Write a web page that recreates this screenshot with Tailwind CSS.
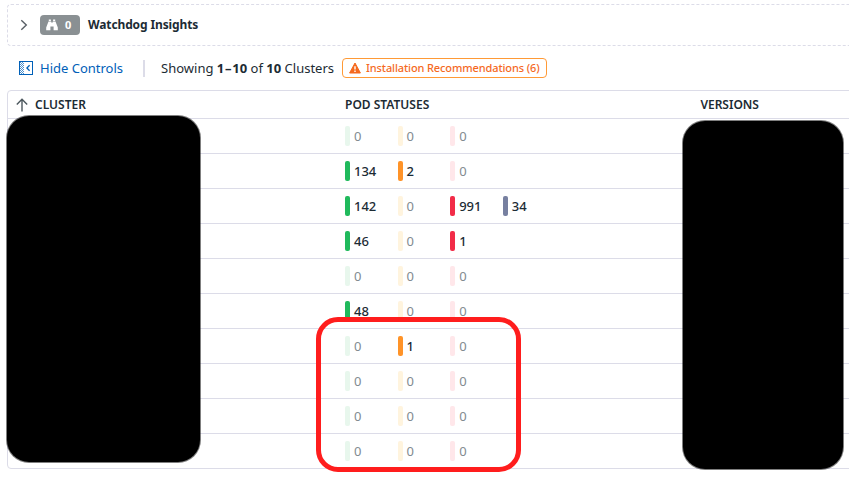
<!DOCTYPE html>
<html lang="en">
<head>
<meta charset="utf-8">
<title>Clusters</title>
<script src="https://cdn.jsdelivr.net/npm/@tailwindcss/browser@4"></script>
</head>
<body class="relative h-[481px] w-[849px] overflow-hidden bg-white font-['Noto_Sans',sans-serif] text-[13px] leading-5 text-[#1c2b34]">
<section class="mt-1 ml-[7px] flex h-[42px] w-[860px] items-center rounded-[4px] border border-dashed border-[#dcdce8] pl-3">
  <svg class="h-3 w-2" viewBox="0 0 8 12" fill="none" stroke="#585f65" stroke-width="1.4"><path d="M1.3 1.2 6.3 6 1.3 10.8"/></svg>
  <span class="ml-3 flex h-5 w-10 items-center rounded-[4px] bg-[#8a9093] pl-[6px] text-[11px] font-bold text-white">
    <svg class="mr-[7px] h-3 w-3" viewBox="0 0 12 12" fill="white"><path d="M2.8.5h2.1v1.6H2.8zM7.1.5h2.1v1.6H7.1zM2.5 2.6h2.7v1h1.6v-1h2.7L11.8 8.6v2.7H7.6V7.6H4.4v3.7H.2V8.6z"/></svg>0
  </span>
  <h2 class="ml-2 text-[12px] font-bold tracking-[-0.12px]">Watchdog Insights</h2>
</section>
<div class="flex h-11 items-center pl-[19px]">
  <button class="flex items-center text-[#0060b8]">
    <svg class="mr-[7px] h-[14px] w-[14px]" viewBox="0 0 14 14" fill="none">
      <defs><pattern id="dots" width="2" height="2" patternUnits="userSpaceOnUse"><path fill="#0060b8" d="M0 0h1v1H0zM1 1h1v1H1z"/></pattern></defs>
      <path fill="url(#dots)" opacity=".7" d="M1 1h4v12H1z"/><rect x=".5" y=".5" width="13" height="13" stroke="#0060b8"/><path d="M10.6 4.2 7.9 7l2.7 2.8" stroke="#0060b8" stroke-width="1.3"/>
    </svg>Hide Controls</button>
  <span class="ml-5 h-[17px] w-[2px] bg-[#dcdce8]"></span>
  <p class="ml-4 w-[173px] whitespace-nowrap">Showing <b>1<span class="mx-[0.8px]">–</span>10</b> of <b>10</b> Clusters</p>
  <button class="ml-2 flex h-5 w-[205px] items-center rounded-[4px] border border-[#ff9a36] pl-[6px] text-[11px] font-medium tracking-[-0.12px] whitespace-nowrap text-[#f5691e]">
    <svg class="mr-[5px] h-3 w-3 shrink-0" viewBox="0 0 12 12"><path fill="#f5691e" stroke="#f5691e" stroke-linejoin="round" d="M6 1 11.4 11H.6z"/><path fill="#fff" d="M5.3 4.2h1.4v3.4H5.3zM5.3 8.6h1.4V10H5.3z"/></svg>Installation Recommendations (6)</button>
</div>
<section class="ml-[7px] h-[379px] w-[860px] rounded-[4px] border border-[#dcdce8]">
  <header class="flex h-7 items-center border-b border-[#dcdce8] text-[12px] font-semibold">
    <div class="flex w-[337px] items-center pl-2"><svg class="mr-[7px] h-[14px] w-3" viewBox="0 0 12 14" fill="none" stroke="#4d585e" stroke-width="1.4"><path d="M6 13.5V1.2M.8 6.5 6 1.2l5.2 5.3"/></svg>CLUSTER</div>
    <div class="w-[355.4px]">POD STATUSES</div>
    <div>VERSIONS</div>
  </header>
  <div id="rows"></div>
</section>
<div class="absolute top-[116px] left-[7px] h-[346px] w-[193px] rounded-[22px] bg-black ring-1 ring-black/50"></div>
<div class="absolute top-[121px] left-[683px] h-[348px] w-[160px] rounded-[22px] bg-black ring-1 ring-black/50"></div>
<div class="absolute top-[317px] left-[316px] h-[155px] w-[205px] rounded-[22px] border-[5px] border-[#ff1d1d]"></div>
<script>
const rows = [[0,0,0],[134,2,0],[142,0,991,34],[46,0,1],[0,0,0],[48,0,0],[0,1,0],[0,0,0],[0,0,0],[0,0,0]];
const on = ['bg-[#20ba5c]','bg-[#ff9328]','bg-[#f22c48]','bg-[#7780a0]'];
const off = ['bg-[#e8f7ed]','bg-[#fff4de]','bg-[#ffe7ea]','bg-[#ededf3]'];
document.getElementById('rows').innerHTML = rows.map(r =>
  `<div class="flex h-[35px] items-center border-b border-[#dcdce8] pl-[337px] last:border-transparent">${r.map((n, i) =>
    `<div class="flex w-[52.6px] items-center gap-1"><span class="h-5 w-[5px] rounded-[2px] ${n ? on[i] : off[i]}"></span><span class="${n ? 'font-medium text-[#1c2b34]' : 'text-[#828b90]'}">${n}</span></div>`).join('')}</div>`).join('');
</script>
</body>
</html>
